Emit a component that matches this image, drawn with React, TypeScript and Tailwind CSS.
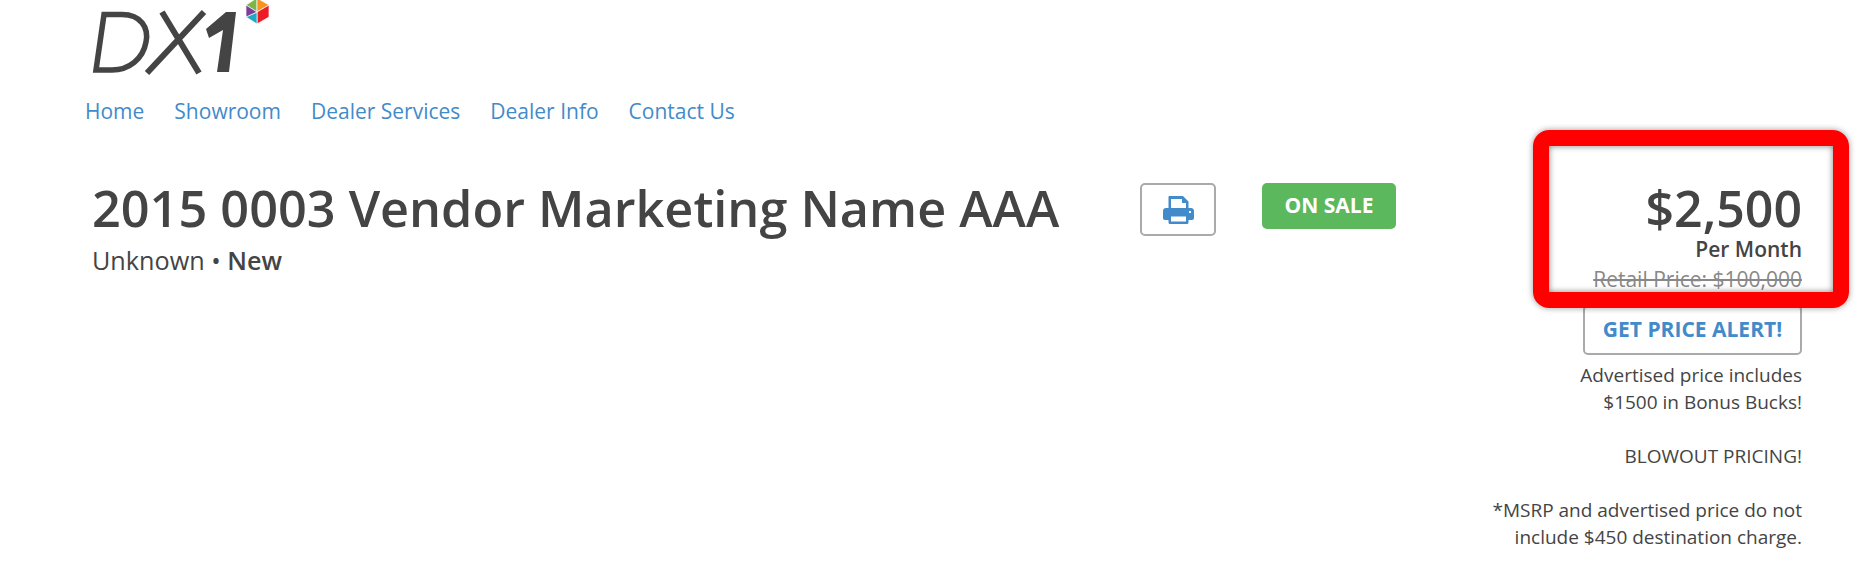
const NAV = ["Home", "Showroom", "Dealer Services", "Dealer Info", "Contact Us"];

function Logo() {
  return (
    <svg className="block" width="190" height="84" viewBox="0 0 190 84" fill="none">
      <path d="M19 14.5H37C56 14.5 64 28 61 42C58 59 44 70 27 70H11Z" stroke="#444444" strokeWidth="5.5" />
      <path d="M77 12L114 73M119 12L62 73" stroke="#444444" strokeWidth="6" />
      <path d="M151 12L144 72H132L138 30L124 38L121 29L141 12Z" fill="#444444" />
      <g stroke="#ffffff" strokeWidth="0.7">
        <path d="M172 12L172 -2L161 5Z" fill="#7ab648" />
        <path d="M172 12L172 -2L184 5Z" fill="#f7941d" />
        <path d="M172 12L184 5V17L172 24Z" fill="#ed1c24" />
        <path d="M172 12L172 24L161 17Z" fill="#1fa9c4" />
        <path d="M172 12L161 5V17Z" fill="#7b3f98" />
      </g>
    </svg>
  );
}

function PrintIcon() {
  return (
    <svg className="block" width="31" height="28" viewBox="0 0 31 28">
      <path
        fill="#428bca"
        d="M6.5 0H20L25.5 5.5V12H28C29.7 12 31 13.3 31 15V22C31 23.2 30.2 24 29 24H25.5V26.5C25.5 27.4 24.9 28 24 28H7C6.1 28 5.5 27.4 5.5 26.5V24H2C.8 24 0 23.2 0 22V15C0 13.3 1.3 12 3 12H5.5V1C5.5 .4 5.9 0 6.5 0Z"
      />
      <path fill="#ffffff" d="M8 3H19V7H23V12H8ZM8 20.5H23V25.5H8Z" />
      <rect x="26" y="15" width="2" height="2" fill="#ffffff" />
    </svg>
  );
}

export default function App() {
  return (
    <div className="relative h-[565px] w-[1861px] overflow-hidden bg-white font-['Open_Sans','Noto_Sans',sans-serif] text-[#444444]">
      {/* header */}
      <div className="pl-[85px]">
        <Logo />
        <nav className="mt-[13px] flex gap-[30px] text-[21px] leading-[28px] text-[#428bca]">
          {NAV.map((n) => (
            <a key={n}>{n}</a>
          ))}
        </nav>
      </div>

      {/* title row */}
      <div className="mt-[53px] flex items-start pl-[92px] pr-[59px]">
        <div className="w-[1048px] shrink-0">
          <h1 className="text-[50.4px] font-semibold leading-[60px]">2015 0003 Vendor Marketing Name AAA</h1>
          <p className="mt-[6px] text-[25.2px] leading-[32px]">
            Unknown • <b className="font-semibold">New</b>
          </p>
        </div>
        <button className="mt-[5px] flex h-[53px] w-[76px] items-center justify-center rounded-[5px] border-2 border-[#aaaaaa]">
          <PrintIcon />
        </button>
        <div className="mt-[5px] ml-[46px] flex h-[46px] w-[134px] items-center justify-center rounded-[5px] bg-[#5cb85c] text-[21px] font-bold text-white">
          ON SALE
        </div>
        <div className="ml-auto flex flex-col items-end text-right">
          <div className="text-[50px] font-semibold leading-[60px]">$2,500</div>
          <div className="mt-[-3px] text-[21px] font-semibold leading-[28px]">Per Month</div>
          <div className="mt-[4px] text-[21px] leading-[24px] text-[#888888] line-through">Retail Price: $100,000</div>
          <button className="mt-[14px] h-[50px] w-[219px] rounded-[5px] border-2 border-[#aaaaaa] text-[21px] font-bold text-[#428bca]">
            GET PRICE ALERT!
          </button>
          <p className="mt-[7px] text-[19px] leading-[27px]">
            Advertised price includes
            <br />
            $1500 in Bonus Bucks!
            <br />
            <br />
            BLOWOUT PRICING!
            <br />
            <br />
            *MSRP and advertised price do not
            <br />
            include $450 destination charge.
          </p>
        </div>
      </div>

      {/* red annotation box */}
      <div className="absolute top-[130px] left-[1533px] h-[178px] w-[316px] rounded-[16px] border-[16px] border-[#ff0000] shadow-[0_0_6px_rgba(0,0,0,0.4),inset_0_0_6px_rgba(0,0,0,0.5)]" />
    </div>
  );
}
